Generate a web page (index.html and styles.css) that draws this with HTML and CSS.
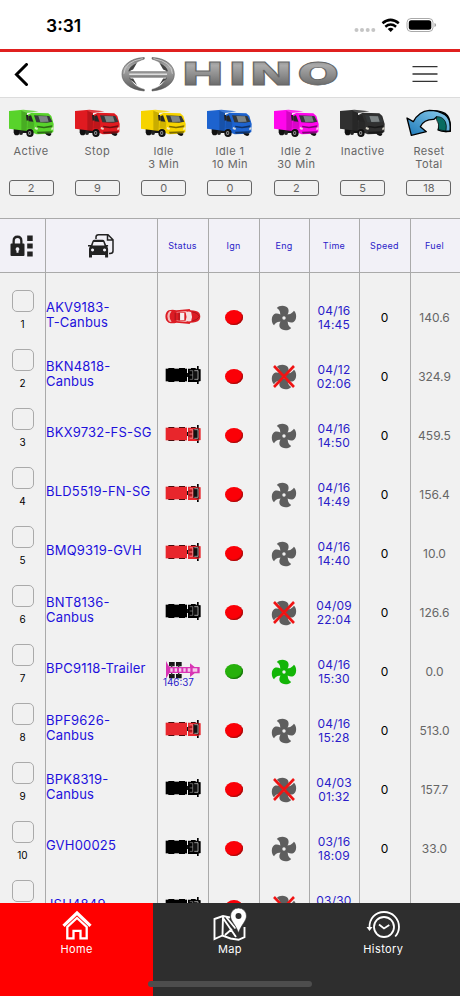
FILE: index.html
```html
<!DOCTYPE html>
<html lang="en">
<head>
    <meta charset="UTF-8">
    <meta name="viewport" content="width=device-width, initial-scale=1">
    <title>Hino Tracking</title>
    <link rel="stylesheet" href="styles.css">
</head>
<body>
    <!-- Shared icons -->
    <svg class="defs">
        <defs>
            <linearGradient id="metal" x1="0" y1="0" x2="0" y2="1">
                <stop offset="0" stop-color="#777"/>
                <stop offset=".3" stop-color="#aaa"/>
                <stop offset=".6" stop-color="#888"/>
                <stop offset="1" stop-color="#555"/>
            </linearGradient>
            <linearGradient id="water" x1="0" y1="1" x2="1" y2="0">
                <stop offset="0" stop-color="#1c78b8"/>
                <stop offset="1" stop-color="#8fd0ee"/>
            </linearGradient>
        </defs>
        <symbol id="truck" viewBox="0 0 135 84">
            <path d="M14 58h60v14H14z" fill="#151515"/>
            <ellipse cx="23" cy="71" rx="8" ry="8" fill="#111"/>
            <ellipse cx="36" cy="71" rx="6" ry="7" fill="#222"/>
            <path d="M0 6 43 2 88 7 54 12 54 66 0 59z" fill="currentColor"/>
            <path d="M43 3 88 7 54 12 37 5z" fill="#fff" opacity=".15"/>
            <path d="M37 5v59l17 2V12z" fill="#000" opacity=".18"/>
            <path d="M55 18 68 11l50 2 9 8 7 24-1 24-10 5-40 2-30-12z" fill="currentColor"/>
            <path d="M57 20l9-3 10 24-2 20-19-3z" fill="#000" opacity=".15"/>
            <path d="M58 22l8-3 7 19-14-1z" fill="#252525"/>
            <path d="M75 19l46 2 9 17-16 3-32-1z" fill="#34383a"/>
            <path d="M88 21l26 1 5 16-25 1z" fill="#b9c3c3" opacity=".55"/>
            <path d="M51 18h6l2 16-6 1z" fill="#222"/>
            <path d="M85 50l20 3 25-4-2 6-23 3-21-3z" fill="#000" opacity=".5"/>
            <path d="M78 54l9 3-2 6-8-3zM133 54l-6 3v7l6-3z" fill="#f3efe0" opacity=".85"/>
            <path d="M84 68l46-1-2 4-42 3z" fill="#000" opacity=".5"/>
            <ellipse cx="63" cy="72" rx="11" ry="12" fill="#111"/>
            <ellipse cx="62" cy="72" rx="5" ry="6" fill="#999"/>
            <ellipse cx="62" cy="72" rx="2.500" ry="3" fill="#222"/>
            <path d="M108 73h19q0 8-7 8t-12-8z" fill="#111"/>
        </symbol>
        <symbol id="fan" viewBox="-38 -38 76 76">
            <g fill="currentColor">
                <path id="blade" d="M-8-3C-13-8-10-13-12-18-14-23-17-26-21-29-14-38 6-38 12-28 16-19 11-10 6-5z"/>
                <use href="#blade" transform="rotate(90)"/>
                <use href="#blade" transform="rotate(180)"/>
                <use href="#blade" transform="rotate(270)"/>
                <circle r="10"/>
            </g>
            <circle r="5" fill="#f1f1f1"/>
        </symbol>
        <symbol id="car" viewBox="0 0 108 46">
            <path d="M10 4Q22 0 34 4l34-3 6-1 3 4q20 0 27 8 6 11 0 22-8 8-27 8l-3 4-6-1-34-3q-12 4-24 0-10-6-10-19T10 4z" fill="#dc1c24"/>
            <path d="M14 6q-8 5-8 17t8 17l5-1q-6-7-6-16t6-16zM34 9l31-3v4l-31 1zM34 37l31 3v-4l-31-1z" fill="#f3b6b6"/>
            <path d="M45 12h13v22H45z" fill="#f7eeee"/>
            <path d="M62 9q12-3 17 1 5 13 0 27-5 3-17 0 5-14 0-28z" fill="#f4dddd"/>
            <path d="M82 9q18 3 22 14-4 10-22 14" fill="none" stroke="#8d1015" stroke-width="2"/>
            <path d="M30 12v22M42 11v25" stroke="#861016" stroke-width="2"/>
        </symbol>
        <symbol id="lorry" viewBox="0 0 108 54">
            <path d="M10 6h18v42H10zM42 6h18v42H42zM78 6h14v42H78zM96 0h5v54h-5z" fill="#000"/>
            <path d="M2 8h64v38H2z" fill="currentColor"/>
            <path d="M66 21h8v12h-8z" fill="#111"/>
            <path d="M69 8h26l12 2v35l-12 3H69z" fill="currentColor"/>
            <path d="M85 13l16-3v34l-16-3z" fill="#111"/>
            <path d="M70 19h12v6H70zM70 29h12v6H70z" fill="#000" opacity=".3"/>
            <path d="M67.500 6v14M67.500 34v15M74 14h9v26h-9M74 27h9" fill="none" stroke="#f1f1f1" stroke-width="2" opacity=".6"/>
            <path d="M88 14h11v26H88" fill="none" stroke="#f1f1f1" stroke-width="2.500" opacity=".7"/>
        </symbol>
        <symbol id="trailer" viewBox="0 0 108 54">
            <path d="M12 3h17v13H12zM33 3h17v13H33zM12 39h17v13H12zM33 39h17v13H33z" fill="#161616"/>
            <path d="M20 12v30M41 12v30" stroke="#333" stroke-width="4"/>
            <path d="M3 0q7 13 10 18h62V7l14 11h15v19H89L75 48V36H13Q10 41 3 53z" fill="#d835b4"/>
            <path d="M16 22h7v10h-7zM29 22h7v10h-7zM42 22h7v10h-7zM55 22h7v10h-7zM68 22h8v10h-8zM83 22h14v10H83z" fill="#f5c9ea"/>
        </symbol>
    </svg>

    <div class="status-bar">
        <span class="clock">3:31</span>
        <svg class="indicators" width="84" height="18" viewBox="0 0 84 18">
            <g fill="#c5c5c5">
                <circle cx="2.500" cy="13" r="2"/><circle cx="8" cy="13" r="2"/>
                <circle cx="13.700" cy="13" r="2"/><circle cx="19.300" cy="13" r="2"/>
            </g>
            <g fill="none" stroke="#000" stroke-width="2.500">
                <path d="M28.500 6.300Q36.500-.5 44.800 6.300M31.300 9.700q5.300-4.300 10.800 0"/>
            </g>
            <path d="M33.700 12q3-2.300 5.900 0l-2.900 3z"/>
            <rect x="53" y="1.500" width="26" height="13" rx="4" fill="none" stroke="#aaa"/>
            <rect x="54.800" y="3.200" width="22.500" height="9.600" rx="2.500"/>
            <path d="M80.500 6v4q1.600-.6 1.600-2t-1.600-2z" fill="#999"/>
        </svg>
    </div>

    <header class="topbar">
        <svg width="16" height="24" viewBox="0 0 16 24" fill="none" stroke="#000" stroke-width="3" stroke-linecap="round"><path d="M13.500 1.500 3.500 11.500l10 10"/></svg>
        <svg class="logo" width="220" height="40" viewBox="0 0 220 40">
            <g transform="translate(-.5 .2) scale(.97 .93)">
                <path d="M24.500 2.500C9 3 1.500 12 1.500 20.500S9 37 24.500 38.500v-1.700C17 35 11.500 30 9.500 23.700h38C45.500 30 40 35 32.500 36.800v1.700C48 37 55.500 29 55.500 20.500S48 3 32.500 2.500v1.700C41 6.500 46 12 47.500 17.700H9.500C11 12 16 6.500 24.500 4.200z" fill="url(#metal)" stroke="#555" stroke-width=".6"/>
                <path d="M9 20.500h39" stroke="#ddd" stroke-width="1.500"/>
                <path d="M17 8Q9 12 8 17.500l5-2zM40 8q8 4 9 9.500l-5-2zM9 25l8 7-4-7zM48 25l-8 7 4-7z" fill="#444"/>
                <path d="M23 3.600Q4 7 3.500 20M34 3.600Q53 7 53.500 20" fill="none" stroke="#c9c9c9"/>
            </g>
            <text class="wordmark" transform="translate(0 29.500) scale(1.700 1)"><tspan x="36.500">H</tspan><tspan x="64">I</tspan><tspan x="76.500">N</tspan><tspan x="104">O</tspan></text>
        </svg>
        <svg width="26" height="18" viewBox="0 0 26 18" stroke="#333" stroke-width="1.300"><path d="M.5 0.700h25M.5 8h25M.5 15.300h25"/></svg>
    </header>

    <section class="summary" id="summary"></section>

    <main class="table">
        <div class="row head">
            <div>
                <svg width="24" height="24" viewBox="0 0 24 24" fill="#222">
                    <path d="M1.500 9.500h1V7q0-5.500 5-5.500t5 5.500v2.500h1q1 0 1 1V21q0 1-1 1h-12q-1 0-1-1V10.500q0-1 1-1zm3.300 0h5.400V7q0-3-2.700-3T4.800 7zM7.500 13.300a1.900 1.900 0 0 0-1 3.500v2h2v-2a1.900 1.900 0 0 0-1-3.500z" fill-rule="evenodd"/>
                    <path d="M17.200 1.500h5.500v5.500h-5.500zM17.200 9.500h5.500v5h-5.500zM17.200 17.500h5.500v5h-5.500z"/>
                </svg>
            </div>
            <div>
                <svg width="27" height="26" viewBox="0 0 27 26">
                    <path d="M8 6V4q0-2.300 2.500-2.300H20l5 5V18q0 2.500-3 2.500h-1M19.500 2v5h5" fill="none" stroke="#222" stroke-width="1.500"/>
                    <path d="M4.500 8q.5-1.300 2-1.300h8q1.500 0 2 1.300l1.600 4h2v1.500h-1q1 1 1 2.500v8.500h-3V22H4v2.500H1V16q0-1.500 1-2.500H0V12h3zm1.200 1L4.500 12.500h12L15.300 9zM4.500 15.500a1.500 1.500 0 1 0 .1 0zm12 0a1.500 1.500 0 1 0 .1 0z" fill="#222" fill-rule="evenodd"/>
                </svg>
            </div>
            <div>Status</div><div>Ign</div><div>Eng</div><div>Time</div><div>Speed</div><div>Fuel</div>
        </div>
        <div class="row spacer"><div></div><div></div><div></div><div></div><div></div><div></div><div></div><div></div></div>
        <div id="vehicles"></div>
    </main>

    <nav class="tabs">
        <a class="active">
            <svg width="30" height="30" viewBox="0 0 30 30" fill="none" stroke="#fff" stroke-width="2.300">
                <path d="M1.500 15.800 15 3l13.500 12.800" stroke-width="3.200"/>
                <path d="M5.300 17v11.300h6.200v-7.500h7v7.500h6.200V17L15 8z"/>
            </svg>
            <span>Home</span>
        </a>
        <a>
            <svg width="34" height="36" viewBox="0 0 34 36">
                <path d="M17 10.500 10 9 1.500 12v20l8-3.500 8 3 8 1.300 6-2.600V20M10 9l-.5 19M10 11l13 19M13.500 10.500l9 11M12 28l7-6" fill="none" stroke="#fff" stroke-width="1.900"/>
                <path d="M25.500 1A8 8 0 0 0 17.500 9c0 5 5.500 9 8 17 2.500-8 8-12 8-17a8 8 0 0 0-8-8z" fill="#fff" stroke="#2e2e2e" stroke-width=".6"/>
                <circle cx="25.500" cy="9" r="3" fill="#2e2e2e"/>
            </svg>
            <span>Map</span>
        </a>
        <a>
            <svg width="34" height="30" viewBox="0 0 34 30" fill="none" stroke="#fff" stroke-width="1.800">
                <circle cx="18" cy="17" r="10"/>
                <path d="M3.500 18C3 8.500 9.500 2 18 2s15 6.500 15 15q0 5.300-3.800 9.500M13 14.500l5 4 5.300-3.500"/>
                <path d="M.5 17h6l-3 4z" fill="#fff" stroke="none"/>
            </svg>
            <span>History</span>
        </a>
        <div class="home-indicator"></div>
    </nav>

    <script>
        const summary = [
            ['Active', '#58d32b', 2],
            ['Stop', '#e01a20', 9],
            ['Idle<br>3 Min', '#f6d300', 0],
            ['Idle 1<br>10 Min', '#1d63cf', 0],
            ['Idle 2<br>30 Min', '#ff06ec', 2],
            ['Inactive', '#303030', 5],
            ['Reset<br>Total', null, 18]
        ];

        // name, status icon, time, fuel
        const vehicles = [
            ['AKV9183-<br>T-Canbus', 'car', '04/16<br>14:45', '140.6'],
            ['BKN4818-<br>Canbus', 'off', '04/12<br>02:06', '324.9'],
            ['BKX9732-FS-SG', 'stop', '04/16<br>14:50', '459.5'],
            ['BLD5519-FN-SG', 'stop', '04/16<br>14:49', '156.4'],
            ['BMQ9319-GVH', 'stop', '04/16<br>14:40', '10.0'],
            ['BNT8136-<br>Canbus', 'off', '04/09<br>22:04', '126.6'],
            ['BPC9118-Trailer', 'trailer', '04/16<br>15:30', '0.0'],
            ['BPF9626-<br>Canbus', 'stop', '04/16<br>15:28', '513.0'],
            ['BPK8319-<br>Canbus', 'off', '04/03<br>01:32', '157.7'],
            ['GVH00025', 'idle-off', '03/16<br>18:09', '33.0'],
            ['JSH4849', 'off', '03/30<br>&nbsp;', '']
        ];

        const resetIcon = `<svg class="truck" viewBox="0 0 135 84" stroke="#000" stroke-width="4" stroke-linejoin="round">
            <path d="M88 20Q104 20 112 29 122 38 120 68L133 67Q135 34 124 19 112 6 85 5z" fill="#087064"/>
            <path d="M92 24Q105 46 96 63 112 70 132 66 136 30 117 17 96 4 70 4 38 7 22 38L3 27 16 79 61 68 43 53Q54 30 84 31z" fill="url(#water)"/>
            <path d="M91 23Q110 22 118 38 123 48 120 66L97 62Q101 45 91 31z" fill="#086b60" stroke-width="2"/>
        </svg>`;

        document.getElementById('summary').innerHTML = summary.map(([label, color, count]) => `
            <div class="stat">
                ${color ? `<svg class="truck" style="color: ${color}"><use href="#truck"/></svg>` : resetIcon}
                <div class="label">${label}</div>
                <div class="count">${count}</div>
            </div>`).join('');

        function statusIcon(type) {
            if (type === 'car') return '<svg class="vehicle car"><use href="#car"/></svg>';
            if (type === 'trailer') return '<svg class="vehicle"><use href="#trailer"/></svg><span class="duration">146:37</span>';
            return `<svg class="vehicle ${type === 'stop' ? 'red' : 'black'}"><use href="#lorry"/></svg>`;
        }

        document.getElementById('vehicles').innerHTML = vehicles.map(([name, type, time, fuel], i) => {
            const on = type === 'trailer' ? 'on' : '';
            const cross = type === 'off' ? '<svg class="cross" viewBox="0 0 22 23"><path d="M1 1l20 21M21 1 1 22"/></svg>' : '';
            // the last row is only half in view
            const last = i === vehicles.length - 1;
            return `
            <div class="row">
                <div class="pick"><span class="box"></span><span>${last ? '' : i + 1}</span></div>
                <div class="name"><span>${name}</span></div>
                <div class="status">${statusIcon(type)}</div>
                <div><span class="dot ${on}"></span></div>
                <div class="eng"><svg class="fan ${on}"><use href="#fan"/></svg>${cross}</div>
                <div class="time">${time}</div>
                <div class="speed">${last ? '' : 0}</div>
                <div class="fuel">${fuel}</div>
            </div>`;
        }).join('');
    </script>
</body>
</html>
```
FILE: styles.css
```css
* {
    margin: 0;
    padding: 0;
    box-sizing: border-box;
}
body {
    height: 996px;
    display: flex;
    flex-direction: column;
    overflow: hidden;
    background: #f1f1f1;
    font-family: Inter, "Liberation Sans", sans-serif;
}
svg {
    display: block;
    flex: none;
}
.defs {
    position: absolute;
    width: 0;
    height: 0;
}
.status-bar {
    height: 49px;
    flex: none;
    display: flex;
    justify-content: space-between;
    padding: 15px 24px 0 46px;
    background: #fff;
}
.clock {
    font-size: 17.5px;
    font-weight: 600;
    line-height: 22px;
}
.indicators {
    margin: 2px -2px 0 0;
}
.topbar {
    height: 49px;
    flex: none;
    display: flex;
    align-items: center;
    justify-content: space-between;
    padding: 0 22px 0 13px;
    background: #fff;
    border-top: 3px solid #e0201f;
    border-bottom: 1px solid #dcdcdc;
}
.logo {
    margin-left: 20px;
}
.wordmark {
    font-size: 31px;
    font-weight: 900;
    fill: url(#metal);
    stroke: #666;
    stroke-width: 0.8px;
}
.summary {
    height: 120px;
    flex: none;
    display: flex;
    justify-content: space-between;
    padding: 10.5px 8.5px 0;
}
.stat {
    width: 45px;
    color: #666;
    text-align: center;
}
.truck {
    width: 45px;
    height: 28px;
}
.label {
    height: 27px;
    margin: 8px -5px 8.5px;
    font-size: 11px;
    line-height: 13.3px;
    letter-spacing: 0.4px;
}
.count {
    height: 16px;
    border: 1px solid #666;
    border-radius: 3px;
    font-size: 11px;
    line-height: 15px;
}
.table {
    flex: 1;
    min-height: 0;
    overflow: hidden;
    border-top: 1px solid #aaa;
}
.row {
    display: grid;
    grid-template-columns: 46px 112px 51px 51px 50px 50px 51px 49px;
    height: 59px;
}
.row > div {
    display: flex;
    align-items: center;
    justify-content: center;
    padding-right: 1px;
    border-right: 1px solid #aaa;
}
.row > div:last-child {
    padding-right: 2px;
    border-right: none;
}
.head {
    height: 54px;
    background: #f2f1f7;
    border-bottom: 1px solid #aaa;
    color: #2a1cc9;
    font-size: 9px;
    letter-spacing: 0.3px;
}
.spacer {
    height: 15px;
}
.row .pick {
    flex-direction: column;
    justify-content: flex-start;
    padding-top: 2px;
    padding-right: 0;
    font-size: 10px;
    line-height: 12px;
}
.box {
    width: 22px;
    height: 22px;
    margin-bottom: 6px;
    border: 1px solid #aaa;
    border-radius: 5px;
}
.row .name {
    justify-content: flex-start;
    padding-bottom: 5px;
    color: #1d10dc;
    font-size: 13px;
    line-height: 15.5px;
    letter-spacing: 0.2px;
    white-space: nowrap;
}
.row .status {
    position: relative;
    padding-right: 0;
    padding-bottom: 3px;
}
.vehicle {
    width: 36px;
    height: 18px;
}
.vehicle.car {
    height: 15px;
}
.red {
    color: #e8262c;
}
.black {
    color: #000;
}
.duration {
    position: absolute;
    left: 5px;
    top: 35px;
    color: #2a1cc9;
    font-size: 9.8px;
    line-height: 12px;
}
.dot {
    width: 18px;
    height: 15px;
    border-radius: 50%;
    background: #fb0007;
    box-shadow: inset -1px -1px 1px #a30a0a;
}
.dot.on {
    background: #27b10c;
    box-shadow: inset -1px -1px 1px #16700a;
}
.row .eng {
    position: relative;
}
.fan {
    width: 26px;
    height: 26px;
    color: #5e5e5e;
}
.fan.on {
    color: #13b507;
}
.cross {
    position: absolute;
    left: 13px;
    top: 18px;
    width: 22px;
    height: 23px;
    fill: none;
    stroke: #f01414;
    stroke-width: 2.6;
}
.time {
    color: #2a1cc9;
    font-size: 12px;
    line-height: 14px;
    letter-spacing: 0.2px;
    text-align: center;
}
.speed {
    font-size: 12px;
}
.fuel {
    color: #666;
    font-size: 12px;
}
.tabs {
    position: relative;
    height: 93px;
    flex: none;
    display: grid;
    grid-template-columns: repeat(3, 1fr);
    background: #2e2e2e;
    color: #fff;
    font-size: 11px;
    letter-spacing: 0.4px;
}
.tabs a {
    display: flex;
    flex-direction: column;
    align-items: center;
}
.tabs a svg {
    height: 36px;
    margin: 4px 0 0;
}
.tabs span {
    line-height: 13px;
}
.active {
    background: #ff0000;
}
.home-indicator {
    position: absolute;
    left: 148px;
    bottom: 9px;
    width: 164px;
    height: 6px;
    border-radius: 3px;
    background: #4d4d4d;
}
```
